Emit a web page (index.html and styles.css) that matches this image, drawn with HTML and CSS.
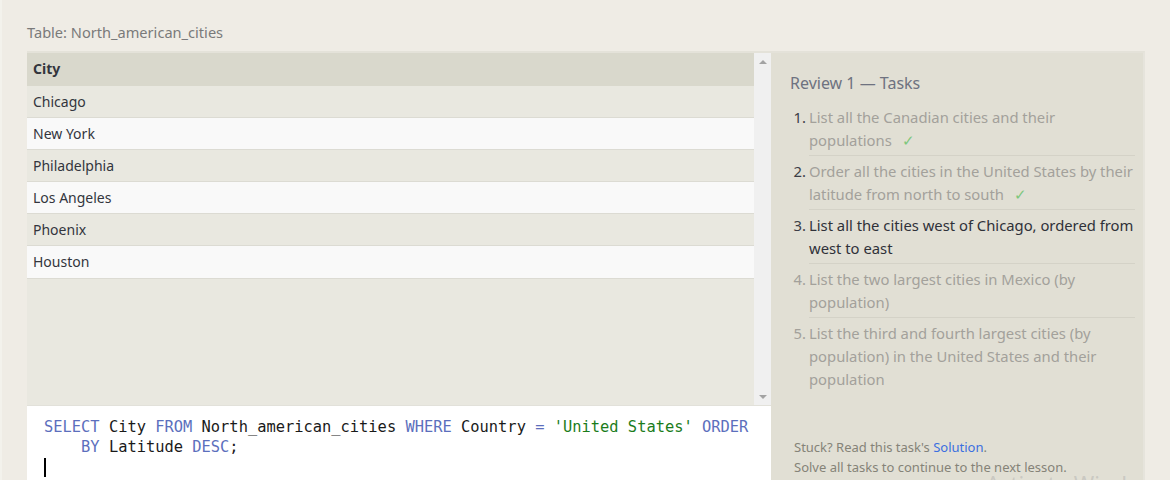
FILE: index.html
```html
<!DOCTYPE html>
<html>
<head>
<meta charset="utf-8">
<link rel="stylesheet" href="styles.css">
</head>
<body>
<div class="page">
  <div class="table-name">Table: North_american_cities</div>
  <div class="workspace">
    <div class="left">
      <div class="results">
        <div class="table">
          <div class="row head">City</div>
          <div class="row odd">Chicago</div>
          <div class="row even">New York</div>
          <div class="row odd">Philadelphia</div>
          <div class="row even">Los Angeles</div>
          <div class="row odd">Phoenix</div>
          <div class="row even">Houston</div>
        </div>
        <div class="scrollbar">
          <span class="arrow up"></span>
          <span class="arrow down"></span>
        </div>
      </div>
      <div class="editor">
        <div class="code-line"><span class="kw">SELECT</span> City <span class="kw">FROM</span> North_american_cities <span class="kw">WHERE</span> Country <span class="kw">=</span> <span class="str">'United States'</span> <span class="kw">ORDER</span></div>
        <div class="code-line wrap"><span class="kw">BY</span> Latitude <span class="kw">DESC</span>;</div>
        <div class="code-line"><span class="cursor"></span></div>
      </div>
    </div>
    <div class="tasks">
      <h2 class="tasks-title">Review 1 — Tasks</h2>
      <ol class="task-list">
        <li class="task done"><span class="num">1.</span><div class="text">List all the Canadian cities and their<br>populations <span class="check">✓</span></div></li>
        <li class="task done"><span class="num">2.</span><div class="text">Order all the cities in the United States by their<br>latitude from north to south <span class="check">✓</span></div></li>
        <li class="task current"><span class="num">3.</span><div class="text">List all the cities west of Chicago, ordered from<br>west to east</div></li>
        <li class="task future"><span class="num">4.</span><div class="text">List the two largest cities in Mexico (by<br>population)</div></li>
        <li class="task future last"><span class="num">5.</span><div class="text">List the third and fourth largest cities (by<br>population) in the United States and their<br>population</div></li>
      </ol>
      <div class="help">
        <div>Stuck? Read this task's <a class="link">Solution</a>.</div>
        <div>Solve all tasks to continue to the next lesson.</div>
      </div>
      <div class="watermark">Activate Windows</div>
    </div>
  </div>
</div>
</body>
</html>
```

FILE: styles.css
```css
html, body {
  margin: 0;
  padding: 0;
  height: 100%;
  overflow: hidden;
}
body {
  background: #efece5;
  font-family: "Noto Sans", "Open Sans", sans-serif;
  color: #33353d;
  border-left: 2px solid #f3f2ec;
  box-sizing: border-box;
}
.page {
  padding: 21px 0 0 25px;
  width: 1118px;
}
.table-name {
  font-size: 14.6px;
  color: #7a7a7a;
  line-height: 22px;
  height: 22px;
  margin-bottom: 8px;
}
.workspace {
  display: flex;
  border-top: 2px solid #e4e2d9;
  border-right: 2px solid #e6e4dc;
  height: 460px;
}
.left {
  width: 744px;
  display: flex;
  flex-direction: column;
}
.results {
  display: flex;
  height: 352px;
  background: #e9e8e0;
}
.table {
  flex: 1;
}
.row {
  height: 31.2px;
  line-height: 31.2px;
  padding-left: 6px;
  font-size: 14px;
  border-bottom: 1px solid #dcdbd3;
  color: #33353d;
}
.row.head {
  height: 32.5px;
  line-height: 32.5px;
  background: #d9d8cc;
  font-weight: bold;
  border-bottom: none;
}
.row.odd { background: #e9e8e0; }
.row.even { background: #f9f9f9; }
.scrollbar {
  width: 17px;
  background: #f0f0f0;
  display: flex;
  flex-direction: column;
  justify-content: space-between;
  align-items: center;
  padding: 7px 0 6px;
  box-sizing: border-box;
}
.arrow {
  width: 0;
  height: 0;
  border-left: 4px solid transparent;
  border-right: 4px solid transparent;
}
.arrow.up { border-bottom: 4px solid #a3a3a3; }
.arrow.down { border-top: 4px solid #a3a3a3; }
.editor {
  flex: 1;
  background: #ffffff;
  border-top: 1px solid #e2e1da;
  padding: 11px 0 0 17px;
  font-family: "DejaVu Sans Mono", "Liberation Mono", monospace;
  font-size: 15.4px;
  color: #1a1a1a;
}
.code-line {
  height: 20px;
  line-height: 20px;
  white-space: pre;
}
.code-line.wrap { padding-left: 4ch; }
.kw { color: #5c6fbd; }
.str { color: #1b7c1b; }
.cursor {
  display: inline-block;
  width: 2px;
  height: 19px;
  background: #000;
  vertical-align: top;
  margin-top: 1px;
}
.tasks {
  flex: 1;
  position: relative;
  overflow: hidden;
  background: #e1dfd4;
  padding: 18px 8px 0 19px;
  box-sizing: border-box;
}
.tasks-title {
  margin: 0 0 7px;
  font-size: 16px;
  font-weight: normal;
  color: #6e7280;
  line-height: 24px;
}
.task-list {
  list-style: none;
  margin: 0;
  padding: 0;
}
.task {
  display: grid;
  grid-template-columns: 19px 1fr;
  font-size: 14.8px;
  line-height: 23px;
  color: #a3a19b;
}
.task .num {
  text-align: right;
  padding-right: 3px;
  padding-top: 4px;
  color: #3c3e46;
}
.task.future .num { color: #a3a19b; }
.task .text {
  padding: 4px 0 3px;
  border-bottom: 1px solid #d4d2c7;
  white-space: nowrap;
}
.task.last .text { border-bottom: none; }
.task.current .text { color: #2f3139; }
.check {
  color: #7dc77d;
  margin-left: 6px;
}
.help {
  margin-top: 43px;
  padding-left: 4px;
  font-size: 13px;
  line-height: 20px;
  color: #858378;
}
.link { color: #3b6fe0; }
.watermark {
  position: absolute;
  left: 215px;
  top: 415px;
  font-size: 22px;
  line-height: 30px;
  color: rgba(165, 165, 165, 0.4);
  white-space: nowrap;
}
```
